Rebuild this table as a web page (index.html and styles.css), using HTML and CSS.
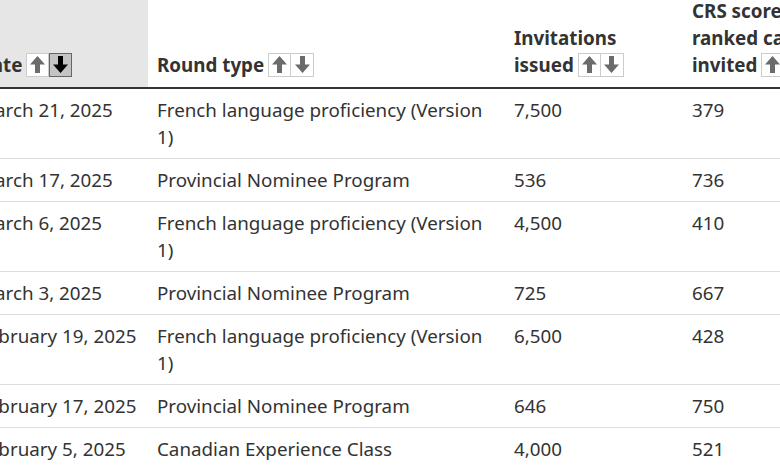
FILE: index.html
```html
<!DOCTYPE html>
<html lang="en">
<head>
<meta charset="utf-8">
<title>Rounds of invitations</title>
<link rel="stylesheet" href="styles.css">
</head>
<body>
<div class="viewport">
<table class="rounds">
  <colgroup>
    <col class="c-date">
    <col class="c-type">
    <col class="c-inv">
    <col class="c-crs">
  </colgroup>
  <thead>
    <tr>
      <th class="sorted">Date <span class="sort"><button class="sbtn" aria-label="Sort ascending"><svg viewBox="0 0 15 17"><path d="M7.5 0 L15 8.5 L10 8.5 L10 17 L5 17 L5 8.5 L0 8.5 Z"/></svg></button><button class="sbtn active" aria-label="Sort descending"><svg viewBox="0 0 15 17"><path d="M7.5 17 L15 8.5 L10 8.5 L10 0 L5 0 L5 8.5 L0 8.5 Z"/></svg></button></span></th>
      <th>Round type <span class="sort"><button class="sbtn" aria-label="Sort ascending"><svg viewBox="0 0 15 17"><path d="M7.5 0 L15 8.5 L10 8.5 L10 17 L5 17 L5 8.5 L0 8.5 Z"/></svg></button><button class="sbtn" aria-label="Sort descending"><svg viewBox="0 0 15 17"><path d="M7.5 17 L15 8.5 L10 8.5 L10 0 L5 0 L5 8.5 L0 8.5 Z"/></svg></button></span></th>
      <th>Invitations issued <span class="sort"><button class="sbtn" aria-label="Sort ascending"><svg viewBox="0 0 15 17"><path d="M7.5 0 L15 8.5 L10 8.5 L10 17 L5 17 L5 8.5 L0 8.5 Z"/></svg></button><button class="sbtn" aria-label="Sort descending"><svg viewBox="0 0 15 17"><path d="M7.5 17 L15 8.5 L10 8.5 L10 0 L5 0 L5 8.5 L0 8.5 Z"/></svg></button></span></th>
      <th>CRS score of lowest-ranked candidates invited <span class="sort"><button class="sbtn" aria-label="Sort ascending"><svg viewBox="0 0 15 17"><path d="M7.5 0 L15 8.5 L10 8.5 L10 17 L5 17 L5 8.5 L0 8.5 Z"/></svg></button><button class="sbtn" aria-label="Sort descending"><svg viewBox="0 0 15 17"><path d="M7.5 17 L15 8.5 L10 8.5 L10 0 L5 0 L5 8.5 L0 8.5 Z"/></svg></button></span></th>
    </tr>
  </thead>
  <tbody>
    <tr><td>March 21, 2025</td><td>French language proficiency (Version 1)</td><td>7,500</td><td>379</td></tr>
    <tr><td>March 17, 2025</td><td>Provincial Nominee Program</td><td>536</td><td>736</td></tr>
    <tr><td>March 6, 2025</td><td>French language proficiency (Version 1)</td><td>4,500</td><td>410</td></tr>
    <tr><td>March 3, 2025</td><td>Provincial Nominee Program</td><td>725</td><td>667</td></tr>
    <tr><td>February 19, 2025</td><td>French language proficiency (Version 1)</td><td>6,500</td><td>428</td></tr>
    <tr><td>February 17, 2025</td><td>Provincial Nominee Program</td><td>646</td><td>750</td></tr>
    <tr><td>February 5, 2025</td><td>Canadian Experience Class</td><td>4,000</td><td>521</td></tr>
  </tbody>
</table>
</div>
</body>
</html>
```

FILE: styles.css
```css
html, body {
  margin: 0;
  padding: 0;
  background: #fff;
}

body {
  font-family: "Noto Sans", "Open Sans", sans-serif;
  font-size: 18.8px;
  line-height: 27px;
  color: #333;
}

.viewport {
  width: 780px;
  height: 470px;
  overflow: hidden;
}

.rounds {
  border-collapse: collapse;
  table-layout: fixed;
  width: 934px;
  margin: -10px 0 0 -31px;
}

.c-date { width: 179px; }
.c-type { width: 357px; }
.c-inv { width: 178px; }
.c-crs { width: 220px; }

.rounds th,
.rounds td {
  text-align: left;
  padding: 8px 8px 7px 9px;
}

.rounds th {
  font-weight: 700;
  vertical-align: bottom;
  border-bottom: 2px solid #333;
  padding-bottom: 8px;
}

.rounds th.sorted {
  background: #e6e6e6;
}

.rounds td {
  vertical-align: top;
  border-top: 1px solid #ddd;
}

.rounds tbody tr:first-child td {
  border-top: 0;
}

.sort {
  display: inline-flex;
  vertical-align: middle;
  margin-left: -1px;
  position: relative;
  top: -2px;
}

.sbtn {
  width: 23px;
  height: 24px;
  padding: 0;
  margin: 0;
  border: 1px solid #ccc;
  background: #fff;
  display: flex;
  align-items: center;
  justify-content: center;
  fill: #6b6b6b;
}

.sbtn + .sbtn {
  border-left: 0;
}

.sbtn svg {
  width: 15px;
  height: 17px;
  display: block;
}

.sbtn.active {
  background: #c4c4c4;
  border: 1px solid #666;
  fill: #000;
}
```
